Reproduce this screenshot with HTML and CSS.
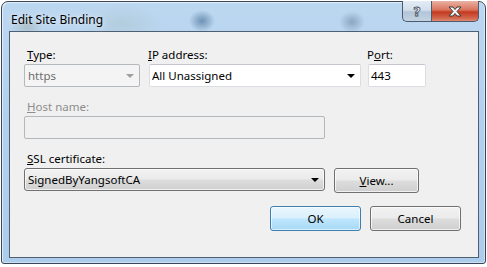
FILE: index.html
```html
<!DOCTYPE html>
<html lang="en">
<head>
    <meta charset="UTF-8">
    <title>Edit Site Binding</title>
    <link rel="stylesheet" href="styles.css">
</head>
<body>
    <div class="window">
        <div class="titlebar">
            <span class="title">Edit Site Binding</span>
            <div class="caption-buttons">
                <div class="cap-btn help-btn">?</div>
                <div class="cap-btn close-btn">
                    <svg width="16" height="11" viewBox="0 0 16 11">
                        <path d="M2 1 L6 1 L8 3.5 L10 1 L14 1 L10 5.5 L14 10 L10 10 L8 7.5 L6 10 L2 10 L6 5.5 Z" fill="#f4f4f4" stroke="#3b3b3b" stroke-width="1"/>
                    </svg>
                </div>
            </div>
        </div>

        <div class="client">
            <div class="row">
                <div class="field">
                    <label><u>T</u>ype:</label>
                    <div class="combo combo-disabled w-type">
                        <span>https</span>
                        <i class="arrow arrow-gray"></i>
                    </div>
                </div>
                <div class="field">
                    <label class="label-flush"><u>I</u>P address:</label>
                    <div class="combo combo-edit w-ip">
                        <span>All Unassigned</span>
                        <i class="arrow"></i>
                    </div>
                </div>
                <div class="field">
                    <label class="label-flush">P<u>o</u>rt:</label>
                    <div class="textbox w-port">443</div>
                </div>
            </div>

            <div class="row">
                <div class="field">
                    <label class="label-disabled"><u>H</u>ost name:</label>
                    <div class="textbox textbox-disabled w-wide"></div>
                </div>
            </div>

            <div class="row">
                <div class="field">
                    <label><u>S</u>SL certificate:</label>
                    <div class="row-inline">
                        <div class="combo combo-button w-wide">
                            <span>SignedByYangsoftCA</span>
                            <i class="arrow"></i>
                        </div>
                        <button class="btn btn-view"><u>V</u>iew...</button>
                    </div>
                </div>
            </div>

            <div class="actions">
                <button class="btn btn-default">OK</button>
                <button class="btn">Cancel</button>
            </div>
        </div>
    </div>
</body>
</html>
```

FILE: styles.css
```css
* {
    margin: 0;
    padding: 0;
    box-sizing: border-box;
}

body {
    background: #ffffff;
    font-family: 'Noto Sans', 'Open Sans', sans-serif;
    font-size: 11.5px;
    color: #000;
}

u {
    text-underline-offset: 1px;
}

.window {
    margin: 1px 0 0 1px;
    width: 485px;
    height: 263px;
    border: 1px solid #3a4656;
    border-radius: 7px 7px 3px 3px;
    padding: 0 6px 5px 7px;
    background:
        radial-gradient(ellipse 13px 11px at 200px 19px, rgba(60, 100, 140, 0.6), rgba(60, 100, 140, 0) 100%),
        radial-gradient(ellipse 13px 11px at 350px 20px, rgba(80, 110, 140, 0.45), rgba(80, 110, 140, 0) 100%),
        radial-gradient(ellipse 16px 10px at 25px 24px, rgba(140, 150, 130, 0.4), rgba(140, 150, 130, 0) 100%),
        radial-gradient(ellipse 40px 20px at 120px 22px, rgba(150, 170, 150, 0.2), rgba(150, 170, 150, 0) 100%),
        linear-gradient(180deg, #bcd7f0 0%, #b3d1ee 40%, #acccec 100%);
    box-shadow: inset 1px 1px 0 rgba(255, 255, 255, 0.6), inset -1px -1px 0 rgba(255, 255, 255, 0.4);
}

.titlebar {
    height: 29px;
    display: flex;
    justify-content: space-between;
    align-items: flex-start;
}

.title {
    padding: 9px 0 0 2px;
    font-size: 12px;
    color: #000;
    text-shadow: 0 0 6px rgba(255, 255, 255, 0.9);
}

.caption-buttons {
    display: flex;
    margin-top: -1px;
}

.cap-btn {
    height: 21px;
    border: 1px solid #4d5b6c;
    border-top: none;
    display: flex;
    align-items: center;
    justify-content: center;
}

.help-btn {
    width: 29px;
    border-right: none;
    border-radius: 0 0 0 5px;
    background: linear-gradient(180deg, #e3ecf5 0%, #d2dfec 45%, #b3c5d8 55%, #c3d3e3 100%);
    font-family: 'DejaVu Sans', sans-serif;
    font-weight: bold;
    font-size: 13px;
    color: #f6f8fa;
    -webkit-text-stroke: 0.8px #3e4a57;
}

.close-btn {
    width: 48px;
    border-radius: 0 0 5px 0;
    background: linear-gradient(180deg, #eab2a4 0%, #d9735c 45%, #c4391f 55%, #d2664c 85%, #e08a73 100%);
}

.client {
    height: 227px;
    border: 1px solid #4f5f72;
    background: #f0f0f0;
    padding: 15px 17px 0 14px;
}

.row {
    display: flex;
    margin-bottom: 12px;
}

.field {
    display: flex;
    flex-direction: column;
    margin-right: 9px;
}

.field:nth-child(2) {
    margin-right: 7px;
}

label {
    display: block;
    height: 16px;
    line-height: 16px;
    padding-left: 3px;
    margin-bottom: 1px;
}

.label-flush {
    padding-left: 0;
    margin-left: -1px;
}

.label-disabled {
    color: #8d8d8d;
}

.row-inline {
    display: flex;
    align-items: flex-start;
}

.combo,
.textbox {
    height: 23px;
    line-height: 21px;
    position: relative;
    white-space: nowrap;
}

.combo span {
    padding-left: 3px;
}

.w-type { width: 116px; }
.w-ip { width: 212px; }
.w-port { width: 58px; }
.w-wide { width: 301px; }

.combo-disabled {
    border: 1px solid #b3b8bc;
    border-radius: 2px;
    background: #f4f4f4;
    color: #6d6d6d;
}

.combo-edit {
    border: 1px solid #dadde2;
    border-top-color: #c4c8ce;
    background: #fff;
    border-radius: 2px;
}

.combo-edit span {
    padding-left: 2px;
}

.combo-button {
    border: 1px solid #707070;
    border-radius: 3px;
    background: linear-gradient(180deg, #f2f2f2 0%, #ebebeb 48%, #dddddd 52%, #cfcfcf 100%);
    box-shadow: inset 0 0 0 1px rgba(255, 255, 255, 0.7);
}

.textbox {
    border: 1px solid #dadde2;
    border-top-color: #c4c8ce;
    background: #fff;
    padding-left: 2px;
    border-radius: 2px;
}

.textbox-disabled {
    background: #f0f0f0;
    border-color: #b3b8bc;
}

/* small drop-down triangle */
.arrow {
    position: absolute;
    right: 5px;
    top: 9px;
    width: 0;
    height: 0;
    border-left: 4px solid transparent;
    border-right: 4px solid transparent;
    border-top: 4px solid #000;
}

.arrow-gray {
    border-top-color: #a0a0a0;
}

.btn {
    height: 25px;
    width: 91px;
    font-family: 'Noto Sans', 'Open Sans', sans-serif;
    font-size: 11.5px;
    color: #000;
    border: 1px solid #707070;
    border-radius: 3px;
    background: linear-gradient(180deg, #f2f2f2 0%, #ebebeb 48%, #dddddd 52%, #cfcfcf 100%);
    box-shadow: inset 0 0 0 1px rgba(255, 255, 255, 0.7);
}

.btn-view {
    width: 85px;
    margin-left: 9px;
}

.btn-default {
    border-color: #3c7fb1;
    background: linear-gradient(180deg, #eaf6fd 0%, #d9f0fc 48%, #bee6fd 52%, #a7d9f5 100%);
    box-shadow: inset 0 0 0 1px rgba(255, 255, 255, 0.6);
}

.actions {
    display: flex;
    justify-content: flex-end;
    gap: 9px;
    margin-top: 13px;
}
```
